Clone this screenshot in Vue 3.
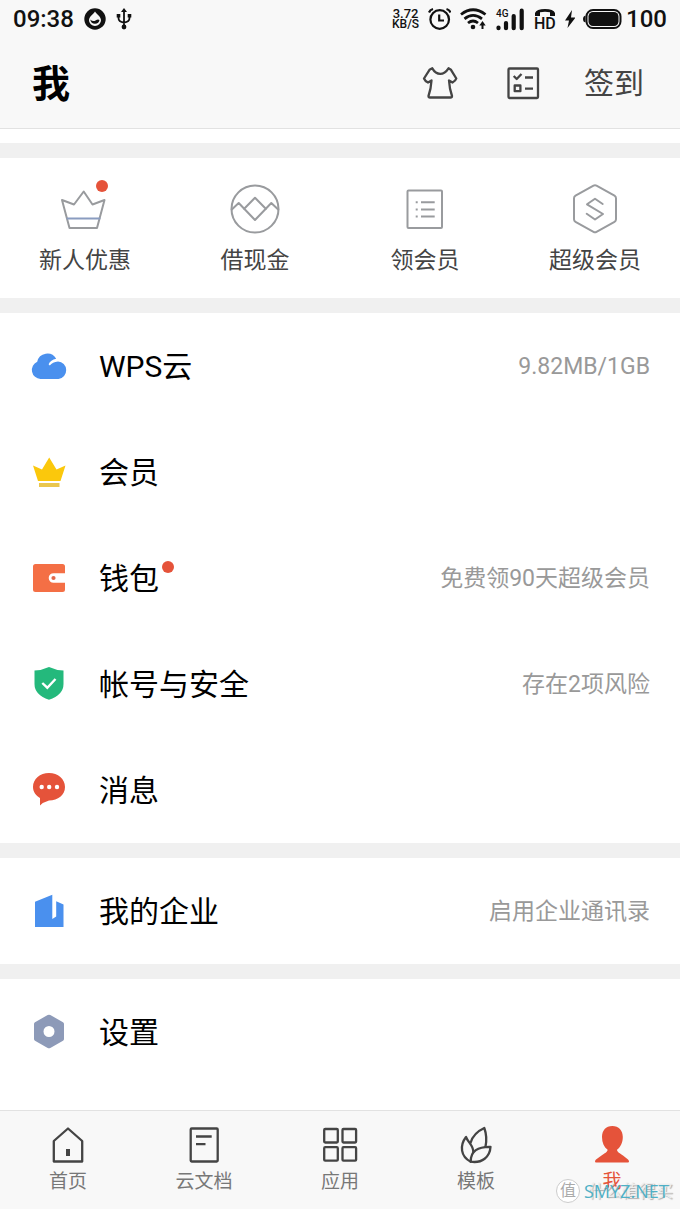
<script setup>
const shortcuts = [
  {
    label: '新人优惠',
    dot: true,
    icon: '<path d="M7 21 19 25.5 28.7 12.5 37.5 25.5 49.5 21 42 49H14.5Z"/><path d="M12.5 39.5H44.5" stroke="#8a9cc0"/>',
  },
  {
    label: '借现金',
    icon: '<circle cx="30" cy="30" r="23.5"/><path d="M30 18.7 40.8 29.8 30 41 19.2 29.8Z"/><path d="M6.8 30.5 13.7 24 19.2 29.8M40.8 29.8 46.3 24 53.2 30.5"/>',
  },
  {
    label: '领会员',
    icon: '<rect x="12.5" y="11.5" width="34.5" height="37.5" rx="1"/><path d="M26 23.2H39.7M26 30.4H39.7M26 37.6H39.7M20.7 23.2H22.7M20.7 30.4H22.7M20.7 37.6H22.7" stroke-linecap="butt"/>',
  },
  {
    label: '超级会员',
    icon: '<path d="M28.5 6.6Q30 5.8 31.5 6.6L49.5 16.6Q51 17.5 51 19.2V40.3Q51 42 49.5 42.8L31.5 52.8Q30 53.6 28.5 52.8L10.5 42.8Q9 42 9 40.3V19.2Q9 17.5 10.5 16.6Z"/><path d="M37.7 25 30 19.7 22 25.3 38 35 30 40.5 21.7 34.8"/>',
  },
]

const groups = [
  [
    {
      label: 'WPS云',
      value: '9.82MB/1GB',
      icon: '<path fill="#4a90ee" d="M11.5 33A9 9 0 0 1 8.2 15.8 10.3 10.3 0 0 1 27.2 12.8Q21.500 14 19.600 18.200L20.800 19.400Q23.500 15.800 29 15.400A8.850 8.850 0 0 1 29.500 33Z"/>',
    },
    {
      label: '会员',
      icon: '<path fill="#fbc80c" d="M4 13.5 13 17.5 20.2 5.5 27.5 17.5 36.5 13.5 31.5 29H9Z"/><path fill="#eac74e" d="M10 31H30.5V35H10Z"/>',
    },
    {
      label: '钱包',
      value: '免费领90天超级会员',
      dot: true,
      icon: '<path fill="#f46f45" d="M6.5 6H33.5Q36 6 36 8.5V15.2H24.5A4.8 4.8 0 0 0 24.5 24.8H36V31.5Q36 34 33.5 34H6.5Q4 34 4 31.5V8.5Q4 6 6.5 6Z"/><circle cx="24.5" cy="20" r="2.1" fill="#e2684b"/>',
    },
    {
      label: '帐号与安全',
      value: '存在2项风险',
      icon: '<path fill="#24b97c" d="M20 3Q27 6.3 34.5 6.5V20Q34.5 31 20 35.8 5.5 31 5.5 20V6.5Q13 6.3 20 3Z"/><path fill="none" stroke="#fff" stroke-width="2.4" d="M13.3 19 18.3 23.7 26.5 15"/>',
    },
    {
      label: '消息',
      icon: '<path fill="#e5533a" d="M20 3C29 3 36 9 36 17S29 30.5 20 30.5Q14.5 32 11 35.5V28C7 25.5 4 22 4 17 4 9 11 3 20 3Z"/><g fill="#fff"><circle cx="12.7" cy="17" r="2.2"/><circle cx="20.2" cy="17" r="2.2"/><circle cx="28" cy="17" r="2.2"/></g>',
    },
  ],
  [
    {
      label: '我的企业',
      value: '启用企业通讯录',
      icon: '<path fill="#4a90ee" d="M6 10.7 23.3 3.7V28L27.2 25.6V10.3L34.5 13.5V36H6Z"/>',
    },
  ],
  [
    {
      label: '设置',
      icon: '<path fill="#8d9ab8" fill-rule="evenodd" d="M18.7 3Q20 2.300 21.300 3L34 10.200Q35 10.800 35 12V27Q35 28.200 34 28.800L21.300 36Q20 36.700 18.700 36L6 28.800Q5 28.200 5 27V12Q5 10.800 6 10.200ZM20 14A5.500 5.500 0 1 0 20 25 5.500 5.500 0 1 0 20 14Z"/>',
    },
  ],
]

const tabs = [
  {
    label: '首页',
    icon: '<path d="M20 3.5 34.2 16V36.5H5.8V16Z"/><path d="M20 24V31" stroke-width="4" stroke-linecap="butt"/>',
  },
  {
    label: '云文档',
    icon: '<rect x="6.7" y="3.5" width="27" height="33" rx="1"/><path d="M12 11.5H27.7M12 19.2H21.5" stroke-linecap="butt"/>',
  },
  {
    label: '应用',
    icon: '<rect x="4.2" y="4" width="13.6" height="13.5" rx="1"/><rect x="22.5" y="4" width="13.6" height="13.5" rx="1"/><rect x="4.2" y="22.2" width="13.6" height="13.5" rx="1"/><rect x="22.5" y="22.2" width="13.6" height="13.5" rx="1"/>',
  },
  {
    label: '模板',
    icon: '<path d="M14.7 17.5Q17.5 8 28.3 3Q31.5 12 29.5 21.5"/><path d="M17.3 27C17.5 20.5 12 17.5 10 12 3.5 20.5 4.5 31.5 14.7 36.7"/><path d="M14.7 36.7C14.5 26 22 21.5 34.5 21.8 34 32 26 38.5 14.7 36.7Z"/>',
  },
  {
    label: '我',
    active: true,
    icon: '<path fill="#e5533a" stroke="none" d="M20.3 1C26.8 1 30.8 5.5 30.8 12 30.8 17.5 28.5 22 25 24.8 25 27 28 28.500 31 30.500L36 34.500Q37 35.500 37 36.500 37 37.500 36 37.500H4Q3 37.500 3 36.500 3 35.500 4 34.500L9.500 30.500C12.500 28.500 15.600 27 15.600 24.800 12 22 10 17.500 10 12 10 5.500 13.800 1 20.300 1Z"/>',
  },
]
</script>

<template>
  <div class="page">
    <header class="top">
      <div class="status">
        <div class="status-left">
          <span class="clock">09:38</span>
          <svg width="22" height="22" viewBox="0 0 22 22" aria-hidden="true">
            <circle cx="11" cy="11" r="10.7" fill="#111" />
            <path d="M11 3.5C12.500 6.500 17 8.500 17 12.200A6 5.700 0 0 1 5 12.200C5 8.500 9.500 6.500 11 3.500Z" fill="#f8f8f8" />
            <path d="M6.200 11.500Q9 14 11.500 12.500T15.500 12Q15 15.700 11 15.700 7 15.700 6.200 11.500Z" fill="#111" />
          </svg>
          <svg width="16" height="22" viewBox="0 0 16 22" aria-hidden="true">
            <path d="M8 3V19M2.500 8V10Q2.500 14 8 14.500 13.500 14 13.500 10V8" fill="none" stroke="#111" stroke-width="1.8" />
            <path d="M8 0 11 4H5ZM.7 6H4.300V9.500H.7ZM11.700 6H15.300V9.500H11.700Z" fill="#111" />
            <circle cx="8" cy="19" r="2.4" fill="#111" />
          </svg>
        </div>
        <div class="status-right">
          <span class="speed"><span class="rate">3.72</span><span>KB/S</span></span>
          <svg width="24" height="24" viewBox="0 0 24 24" fill="none" stroke="#111" stroke-width="2.2" aria-hidden="true">
            <circle cx="12.7" cy="12.5" r="9.3" />
            <path d="M12.200 7.500V13.500H17M2 5.500Q3 2.800 6 2M19.500 2Q22.500 2.800 23.500 5.500" />
          </svg>
          <svg width="28" height="24" viewBox="0 0 28 24" fill="none" stroke="#111" stroke-width="2.8" aria-hidden="true">
            <path d="M2 7.500Q14 -2 26.500 7.500M5.500 11.800Q14 5 23 11.800M9 16Q14 12 19 16" />
            <circle cx="14" cy="20" r="2.3" fill="#111" stroke="none" />
            <path d="M23.500 22V17" stroke-width="2" />
            <path d="M20.300 18.500 23.500 14 26.700 18.500Z" fill="#111" stroke="none" />
          </svg>
          <svg width="30" height="24" viewBox="0 0 30 24" aria-hidden="true">
            <text x="1" y="10" class="svg-text network">4G</text>
            <path d="M3.500 20.500V21.200M11 16V21.200M18.700 9V21.200M26.700 3.700V21.200" stroke="#111" stroke-width="4.2" stroke-linecap="round" />
          </svg>
          <svg width="24" height="32" viewBox="0 0 24 32" aria-hidden="true">
            <path d="M2 13V10Q3.500 6 12 6T22 10V13H17V9.200Q12 8.200 7 9.200V13Z" fill="#111" />
            <text x="1" y="26" class="svg-text voice">HD</text>
          </svg>
          <svg width="10" height="24" viewBox="0 0 10 24" aria-hidden="true">
            <path d="M7 3 0 13.500H4L2.500 21 10.500 10.500H6Z" fill="#111" />
          </svg>
          <span class="battery">
            <svg width="39" height="24" viewBox="0 0 39 24" aria-hidden="true">
              <rect x="3.5" y="3" width="34" height="18" rx="6.5" fill="none" stroke="#111" stroke-width="2" />
              <rect x="5.5" y="5" width="30" height="14" rx="4.5" fill="#111" />
              <path d="M2.500 8.500V15.500Q0 15 0 12T2.500 8.500Z" fill="#111" />
            </svg>
            <span class="clock">100</span>
          </span>
        </div>
      </div>

      <div class="titlebar">
        <h1>我</h1>
        <div class="actions">
          <button type="button" aria-label="皮肤">
            <svg width="40" height="40" viewBox="0 0 40 40" class="line">
              <path d="M12.300 5.300Q15.500 10.800 20.200 10.800T28.500 5.300L31 6.800 36.300 15.500Q35.500 18 32.500 19.500L29 17.500Q29.500 26 32 33 32 34.500 30.500 34.500H10Q8.500 34.500 8.500 33 11 26 11.500 17.500L8 19.500Q5 18 4 15.500L9.500 6.800Z" />
            </svg>
          </button>
          <button type="button" aria-label="任务">
            <svg width="40" height="40" viewBox="0 0 40 40" class="line">
              <rect x="6.5" y="5.5" width="29.5" height="29.5" rx="1" />
              <path d="M11.700 13 14.700 16 19.500 11M23 14.500H31M23 25.700H31" stroke-linecap="butt" />
              <rect x="12.7" y="22.5" width="5.7" height="5.7" />
            </svg>
          </button>
          <button type="button" class="checkin">签到</button>
        </div>
      </div>
    </header>

    <main>
      <div class="strip"></div>
      <nav class="shortcuts" aria-label="会员服务">
        <a v-for="s in shortcuts" :key="s.label" href="#">
          <span class="badge-host">
            <svg width="60" height="60" viewBox="0 0 60 60" class="line thin" aria-hidden="true" v-html="s.icon"></svg>
            <i v-if="s.dot" class="dot on-icon"></i>
          </span>
          <span>{{ s.label }}</span>
        </a>
      </nav>

      <ul v-for="(group, g) in groups" :key="g" class="group">
        <li v-for="item in group" :key="item.label">
          <button type="button" class="row">
            <svg width="40" height="40" viewBox="0 0 40 40" aria-hidden="true" v-html="item.icon"></svg>
            <span class="name badge-host">{{ item.label }}<i v-if="item.dot" class="dot on-text"></i></span>
            <span v-if="item.value" class="value">{{ item.value }}</span>
          </button>
        </li>
      </ul>
    </main>

    <nav class="tabs" aria-label="主导航">
      <a v-for="t in tabs" :key="t.label" href="#" :class="{ active: t.active }">
        <svg width="40" height="40" viewBox="0 0 40 40" class="line" aria-hidden="true" v-html="t.icon"></svg>
        <span>{{ t.label }}</span>
      </a>
      <div class="watermark">
        <span class="seal">值</span>
        <span class="brand">什么值得买</span>
        <span class="site">SMYZ.NET</span>
      </div>
    </nav>
  </div>
</template>

<style>
body {
  background: #fff;
}
</style>

<style scoped>
.page {
  display: flex;
  flex-direction: column;
  min-height: 100vh;
  color: #111;
  font-family: Roboto, "Noto Sans CJK SC", sans-serif;
}

.page * {
  box-sizing: border-box;
}

svg {
  display: block;
  flex: none;
}

button {
  padding: 0;
  border: 0;
  background: none;
  color: inherit;
  font: inherit;
  cursor: pointer;
}

a {
  color: inherit;
  text-decoration: none;
}

.top {
  background: #f8f8f8;
  border-bottom: 1px solid #e2e2e2;
}

.status {
  display: flex;
  justify-content: space-between;
  align-items: center;
  height: 38px;
  padding: 0 13px;
}

.status-left,
.status-right,
.battery {
  display: flex;
  align-items: center;
}

.status-left {
  gap: 10px;
}

.status-right {
  gap: 8px;
}

.battery {
  gap: 4px;
}

.clock {
  font-size: 24px;
  font-weight: 500;
  line-height: 28px;
}

.speed {
  display: flex;
  flex-direction: column;
  align-items: center;
  font-size: 12px;
  font-weight: 500;
  line-height: 11px;
}

.rate {
  font-size: 13px;
}

.svg-text {
  font-family: Roboto, sans-serif;
  font-weight: 500;
  fill: #111;
}

.network {
  font-size: 10px;
}

.voice {
  font-size: 16px;
}

.titlebar {
  display: flex;
  justify-content: space-between;
  align-items: center;
  height: 90px;
  padding: 0 36px 0 32px;
}

h1 {
  margin: 0;
  padding-top: 2px;
  font-size: 38px;
  font-weight: 700;
  line-height: 48px;
  color: #000;
}

.actions {
  display: flex;
  align-items: center;
  gap: 42px;
}

.checkin {
  padding-top: 2px;
  font-size: 30px;
  line-height: 40px;
  color: #444;
}

.line {
  fill: none;
  stroke: #444;
  stroke-width: 2.3;
  stroke-linejoin: round;
  stroke-linecap: round;
}

.thin {
  stroke: #999b9e;
  stroke-width: 2;
}

.strip {
  height: 14px;
}

.shortcuts {
  display: grid;
  grid-template-columns: repeat(4, 1fr);
  border-top: 15px solid #f0f0f0;
  padding: 21px 0;
}

.shortcuts a {
  display: flex;
  flex-direction: column;
  align-items: center;
  gap: 6px;
  font-size: 23px;
  line-height: 32px;
  color: #444;
}

.badge-host {
  position: relative;
}

.dot {
  position: absolute;
  width: 12px;
  height: 12px;
  border-radius: 50%;
  background: #e5533a;
}

.on-icon {
  top: 1px;
  right: 7px;
}

.on-text {
  top: 4px;
  right: -15px;
}

.group {
  margin: 0;
  padding: 0;
  list-style: none;
  border-top: 15px solid #f0f0f0;
}

.row {
  display: flex;
  align-items: center;
  gap: 30px;
  width: 100%;
  height: 106px;
  padding: 0 30px 0 29px;
  text-align: left;
}

.name {
  padding-top: 2px;
  font-size: 30px;
  line-height: 40px;
  color: #000;
}

.value {
  margin-left: auto;
  padding-top: 2px;
  font-size: 23px;
  line-height: 32px;
  color: #999;
}

.tabs {
  position: sticky;
  bottom: 0;
  display: grid;
  grid-template-columns: repeat(5, 1fr);
  margin-top: auto;
  padding: 14px 0 13px;
  background: #f8f8f8;
  border-top: 1px solid #e2e2e2;
}

.tabs a {
  display: flex;
  flex-direction: column;
  align-items: center;
  gap: 3px;
  font-size: 19px;
  line-height: 28px;
  color: #777;
}

.tabs a.active {
  color: #e5533a;
}

.watermark {
  position: absolute;
  right: 7px;
  bottom: 6px;
  display: grid;
  grid-template-columns: 24px auto;
  align-items: center;
  column-gap: 4px;
  pointer-events: none;
}

.seal {
  width: 24px;
  height: 24px;
  border: 1px solid #ccc;
  border-radius: 50%;
  background: #fff;
  color: #aaa;
  font-size: 16px;
  line-height: 22px;
  text-align: center;
}

.brand,
.site {
  grid-row: 1;
  grid-column: 2;
  line-height: 24px;
}

.brand {
  padding-left: 4px;
  font-size: 17px;
  color: #eee;
  text-shadow: 1px 1px 1px #aaa;
}

.site {
  font-family: "Open Sans", sans-serif;
  font-size: 18px;
  color: #4fb0c6;
}
</style>
